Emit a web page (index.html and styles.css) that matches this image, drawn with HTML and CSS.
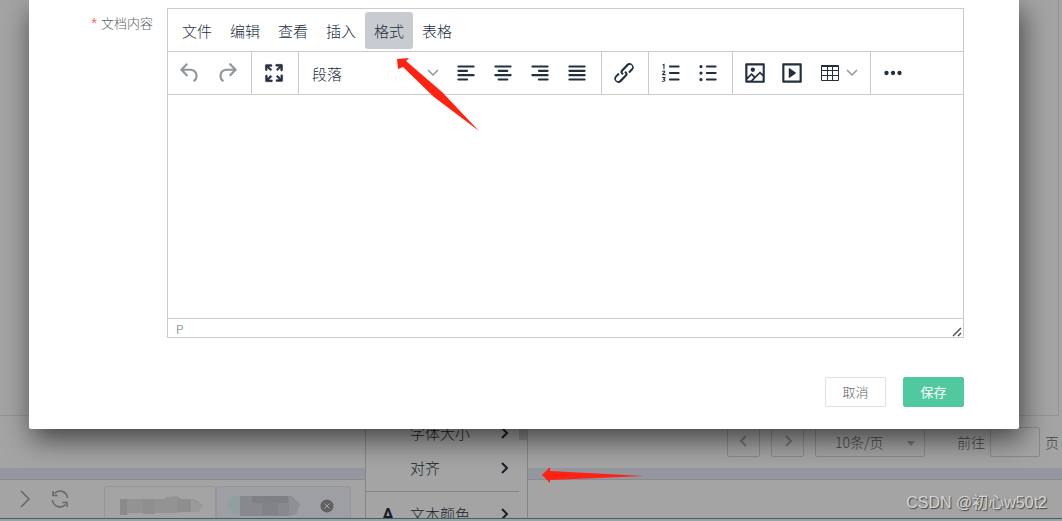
FILE: index.html
```html
<!DOCTYPE html>
<html lang="zh-CN">
<head>
<meta charset="utf-8">
<title>文档内容</title>
<link rel="stylesheet" href="styles.css">
</head>
<body>
<div class="app">
  <div class="panel"></div>
  <div class="pager">
    <button class="page-btn" aria-label="上一页"><svg width="12" height="12" viewBox="0 0 12 12"><path d="M8 1 3 6l5 5"/></svg></button>
    <button class="page-btn" aria-label="下一页"><svg width="12" height="12" viewBox="0 0 12 12"><path d="m4 1 5 5-5 5"/></svg></button>
    <span class="page-size">
      <select aria-label="每页条数"><option>10条/页</option></select>
      <svg width="8" height="5" viewBox="0 0 8 5"><path d="M0 0h8L4 5z"/></svg>
    </span>
    <label class="jump">前往 <input type="text" aria-label="页码"></label>
    <span class="unit">页</span>
  </div>
  <div class="band"></div>
  <div class="tabbar">
    <div class="tab-tools">
      <button class="tool" aria-label="展开"><svg width="12" height="18" viewBox="0 0 12 18"><path d="m2 1 8 8-8 8"/></svg></button>
      <button class="tool" aria-label="刷新"><svg width="18" height="18" viewBox="0 0 18 18"><path d="M1.500 10A7.500 7.500 0 0 0 14.500 14.500M16.500 8A7.500 7.500 0 0 0 3.500 3.500M2 1v4.500h4.500M16 17v-4.500h-4.500"/></svg></button>
    </div>
    <div class="tabs">
      <button class="tab" aria-label="标签一">
        <svg width="84" height="20" viewBox="0 0 84 20"><path fill="#939393" d="M1 3h44l3-2 10-1 5 3h12l9 6-5 7H62l-5 1H10l-2 2H1z"/><path fill="#8d908f" d="M24 3h12v15H24z"/><path fill="#898a89" d="M1 3h7v16H1z"/><path fill="#8e8e8e" d="M58 3h14v13H58z"/><path fill="#999b9a" d="m72 3 12 6-5 7h-7z"/></svg>
      </button>
      <button class="tab tab-on" aria-label="标签二">
        <svg width="72" height="20" viewBox="0 0 72 20"><path fill="#91a09f" d="m5 0 7 0v18H6l-6-7V6z"/><path fill="#87898f" d="M12 0h51l9 8-4 10-8 2H12z"/><path fill="#7f8085" d="M24 0h36v7H24z"/><path fill="#828389" d="M34 7h16v12H34z"/><path fill="#8f9095" d="m61 0 11 8-4 10h-7z"/></svg>
        <svg class="close" width="14" height="14" viewBox="0 0 14 14"><circle cx="7" cy="7" r="6.500"/><path d="m4.500 4.500 5 5m0-5-5 5"/></svg>
      </button>
    </div>
  </div>
  <div class="footline"></div>
</div>

<div class="format-menu" role="menu">
  <div class="format-list">
    <button class="item" role="menuitem"><span class="mark"></span><span class="name">字体大小</span><svg width="10" height="12" viewBox="0 0 10 12"><path d="m2 1 5 5-5 5"/></svg></button>
    <button class="item" role="menuitem"><span class="mark"></span><span class="name">对齐</span><svg width="10" height="12" viewBox="0 0 10 12"><path d="m2 1 5 5-5 5"/></svg></button>
    <hr class="rule">
    <button class="item" role="menuitem"><span class="mark">A</span><span class="name">文本颜色</span><svg width="10" height="12" viewBox="0 0 10 12"><path d="m2 1 5 5-5 5"/></svg></button>
  </div>
  <div class="scroll"><div class="thumb"></div></div>
</div>

<div class="dialog" role="dialog" aria-label="文档">
  <div class="field">
    <label class="caption" for="content"><span class="star">*</span>文档内容</label>
    <div class="editor">
      <div class="menubar">
        <button class="menu">文件</button><button class="menu">编辑</button><button class="menu">查看</button><button class="menu">插入</button><button class="menu menu-on">格式</button><button class="menu">表格</button>
      </div>
      <div class="toolbar">
        <div class="group">
          <button class="tb dim" aria-label="撤销"><svg class="ico" viewBox="0 0 24 24"><path d="M6.4 8H12c3.7 0 6.200 2 6.800 5.100.6 2.700-.4 5.600-2.300 6.800a1 1 0 0 1-1-1.800c1.100-.6 1.800-2.700 1.400-4.600-.5-2.100-2.100-3.500-4.900-3.500H6.400l3.300 3.300a1 1 0 1 1-1.400 1.400l-5-5a1 1 0 0 1 0-1.400l5-5a1 1 0 0 1 1.400 1.400L6.400 8z"/></svg></button>
          <button class="tb dim" aria-label="重做"><svg class="ico" viewBox="0 0 24 24"><path d="M17.600 10H12c-2.800 0-4.400 1.400-4.900 3.500-.4 2 .3 4 1.400 4.600a1 1 0 1 1-1 1.800c-2-1.200-2.900-4.100-2.300-6.800.6-3 3-5.100 6.800-5.100h5.600l-3.300-3.300a1 1 0 1 1 1.400-1.400l5 5a1 1 0 0 1 0 1.400l-5 5a1 1 0 0 1-1.400-1.400l3.300-3.300z"/></svg></button>
        </div>
        <div class="group">
          <button class="tb" aria-label="全屏"><svg class="ico bold" viewBox="0 0 24 24"><path d="m15.300 10-1.200-1.300 2.900-3h-2.300a.9.9 0 1 1 0-1.700H19c.5 0 .9.4.9.9v4.400a.9.9 0 1 1-1.800 0V7l-2.900 3zm0 4 3 3v-2.300a.9.9 0 1 1 1.700 0V19c0 .5-.4.9-.9.9h-4.400a.9.9 0 1 1 0-1.800H17l-3-2.900 1.300-1.200zM10 15.400l-2.900 3h2.300a.9.9 0 1 1 0 1.700H5a.9.9 0 0 1-.9-.9v-4.400a.9.9 0 1 1 1.800 0V17l2.900-3 1.200 1.300zM8.700 10l-3-3v2.300a.9.9 0 0 1-1.700 0V5c0-.5.4-.9.9-.9h4.400a.9.9 0 0 1 0 1.800H7l3 2.900-1.300 1.200z"/></svg></button>
        </div>
        <div class="group">
          <span class="block-format">
            <select aria-label="段落格式"><option>段落</option></select>
            <svg class="chev" width="12" height="8" viewBox="0 0 12 8"><path d="m1 1 5 5 5-5"/></svg>
          </span>
          <button class="tb" aria-label="左对齐"><svg class="ico line" viewBox="0 0 24 24"><path d="M5 6h14M5 10h8M5 14h14M5 18h8"/></svg></button>
          <button class="tb" aria-label="居中"><svg class="ico line" viewBox="0 0 24 24"><path d="M5 6h14M8 10h8M5 14h14M8 18h8"/></svg></button>
          <button class="tb" aria-label="右对齐"><svg class="ico line" viewBox="0 0 24 24"><path d="M5 6h14M11 10h8M5 14h14M11 18h8"/></svg></button>
          <button class="tb" aria-label="两端对齐"><svg class="ico line" viewBox="0 0 24 24"><path d="M5 6h14M5 10h14M5 14h14M5 18h14"/></svg></button>
        </div>
        <div class="group">
          <button class="tb" aria-label="链接"><svg class="ico" viewBox="0 0 24 24"><path d="M6.200 12.300a1 1 0 0 1 1.400 1.400l-2.100 2a2 2 0 1 0 2.700 2.800l4.800-4.800a1 1 0 0 0 0-1.400 1 1 0 1 1 1.400-1.300 2.900 2.900 0 0 1 0 4L9.600 20a3.900 3.900 0 0 1-5.500-5.500l2-2zm11.600-.6a1 1 0 0 1-1.400-1.400l2-2a2 2 0 1 0-2.600-2.800L11 10.300a1 1 0 0 0 0 1.400A1 1 0 1 1 9.600 13a2.900 2.900 0 0 1 0-4L14.400 4a3.900 3.900 0 0 1 5.500 5.500l-2 2z"/></svg></button>
        </div>
        <div class="group">
          <button class="tb" aria-label="编号列表"><svg class="ico line" viewBox="0 0 24 24"><path d="M11 6h8M11 12h8M11 18h8"/><path class="fine" d="m4.500 4.500 1-.5v4M4.300 10.600c.6-.8 2.200-.6 2 .4-.1.700-1.900 1.300-2 2.500h2.400M4.300 16.200h2l-1 1.500c1.600 0 1.600 2.200-1.200 1.900"/></svg></button>
          <button class="tb" aria-label="项目列表"><svg class="ico line" viewBox="0 0 24 24"><path d="M11 6h8M11 12h8M11 18h8"/><path class="dots" d="M5.500 6h0M5.500 12h0M5.500 18h0"/></svg></button>
        </div>
        <div class="group">
          <button class="tb" aria-label="图片"><svg class="ico" viewBox="0 0 24 24"><path fill-rule="evenodd" d="m5 15.700 3.300-3.200c.3-.3.7-.3 1 0L12 15l4.100-4c.3-.4.8-.4 1 0l2 1.900V5H5v10.700zM5 18v1h3l2.800-2.900-2-2L5 17.900zm14-3-2.500-2.400-6.400 6.500H19v-4zM4 3h16c.6 0 1 .4 1 1v16c0 .6-.4 1-1 1H4a1 1 0 0 1-1-1V4c0-.6.4-1 1-1zm6 8a2 2 0 1 0 0-4 2 2 0 0 0 0 4z"/></svg></button>
          <button class="tb" aria-label="媒体"><svg class="ico" viewBox="0 0 24 24"><path fill-rule="evenodd" d="M4 3h16c.6 0 1 .4 1 1v16c0 .6-.4 1-1 1H4a1 1 0 0 1-1-1V4c0-.6.4-1 1-1zm1 2v14h14V5H5z"/><path d="m9.800 7.600 5.600 4a.5.5 0 0 1 0 .8l-5.600 4A.5.5 0 0 1 9 16V8a.5.5 0 0 1 .8-.4z"/></svg></button>
          <button class="tb split" aria-label="表格"><svg class="ico grid" viewBox="0 0 26 26"><path d="M4.500 5.500h17v15h-17zM4.500 6.500h17M4.500 10.500h17M4.500 15.500h17M10.500 6v14M15.500 6v14"/></svg><svg class="chev" width="12" height="8" viewBox="0 0 12 8"><path d="m1 1 5 5 5-5"/></svg></button>
        </div>
        <div class="group">
          <button class="tb" aria-label="更多"><svg class="ico" viewBox="0 0 24 24"><circle cx="6" cy="12" r="2"/><circle cx="12" cy="12" r="2"/><circle cx="18" cy="12" r="2"/></svg></button>
        </div>
      </div>
      <textarea class="content" id="content"></textarea>
      <div class="status"><span>P</span><svg width="10" height="10" viewBox="0 0 10 10"><path d="M1 9 9 1M6 9l3-3"/></svg></div>
    </div>
  </div>
  <div class="actions">
    <button class="btn">取消</button>
    <button class="btn btn-save">保存</button>
  </div>
</div>

<svg class="arrow arrow-format" width="84" height="75" viewBox="0 0 84 75"><path d="m1 2 12-1-3 3 36 31 37 39-45-34L7 10l-5 2z"/></svg>
<svg class="arrow arrow-align" width="102" height="16" viewBox="0 0 102 16"><path d="m0 8 8-8v4l94 5-94 4v3z"/></svg>
<div class="watermark">CSDN @初心w50t2</div>
</body>
</html>
```
FILE: styles.css
```css
* { box-sizing: border-box; }

body {
  margin: 0;
  height: 100vh;
  position: relative;
  overflow: hidden;
  background: #a4a4a4;
  color: #222f3e;
  font: 300 14px "Noto Sans CJK SC", sans-serif;
}

button, select, input, textarea {
  margin: 0;
  padding: 0;
  border: 0;
  background: none;
  color: inherit;
  font: inherit;
  border-radius: 0;
}

select { appearance: none; }
svg { display: block; flex: none; fill: none; }

/* page behind the dialog */
.app { height: 100%; display: flex; flex-direction: column; }

.panel {
  flex: 1;
  margin-right: 3px;
  border: solid #949497;
  border-width: 0 1px 1px 0;
}

.pager {
  display: flex;
  justify-content: flex-end;
  align-items: center;
  padding: 11px 3px;
  color: #44464a;
}

.page-btn {
  width: 33px;
  height: 30px;
  margin-right: 11px;
  padding-bottom: 2px;
  display: flex;
  align-items: center;
  justify-content: center;
  border: 1px solid #8a8b8f;
  border-radius: 2px;
}
.page-btn svg { stroke: #77787c; stroke-width: 2; }

.page-size {
  display: grid;
  width: 110px;
  height: 30px;
  margin-right: 32px;
  border: 1px solid #8a8b8f;
  border-radius: 2px;
  align-items: center;
}
.page-size > * { grid-area: 1 / 1; }
.page-size select { height: 28px; padding-left: 19px; }
.page-size svg { fill: #77787c; justify-self: end; margin: 3px 9px 0 0; pointer-events: none; }

.jump { display: flex; align-items: center; gap: 5px; }
.jump input { width: 50px; height: 30px; border: 1px solid #8a8b8f; border-radius: 2px; }
.unit { margin-left: 5px; }

.band { height: 12px; background: #9496a0; border-bottom: 1px solid #898a92; }

.tabbar { display: flex; height: 38px; }
.tab-tools { display: flex; align-items: center; gap: 20px; width: 104px; padding-left: 19px; }
.tool svg { stroke: #62676c; stroke-width: 1.5; }
.tabs { display: flex; align-items: flex-end; }
.tab {
  display: flex;
  align-items: center;
  height: 32px;
  width: 112px;
  padding: 6px 0 0 14px;
  border: 1px solid #959698;
  border-bottom: 0;
  border-radius: 4px 4px 0 0;
}
.tab-on { width: 135px; padding-left: 11px; gap: 20px; background: #9d9fa4; }
.close circle { fill: #616161; }
.close path { stroke: #a4a4a4; stroke-width: 1; }

.footline { height: 3px; background: #95a6a9; border-top: 1px solid #4f5a60; }

/* submenu reaching below the dialog */
.format-menu {
  position: absolute;
  left: 365px;
  top: 415px;
  bottom: 3px;
  width: 163px;
  display: flex;
  overflow: hidden;
  background: #a4a4a4;
  border: solid #858585;
  border-width: 0 1px;
  color: #171f29;
  font-size: 15px;
}
.format-list { flex: 1; }
.item { display: flex; align-items: center; width: 100%; height: 35px; padding-right: 9px; text-align: left; }
.item svg { stroke: #171f29; stroke-width: 2; }
.mark { width: 44px; text-align: center; font: bold 17px/20px Roboto, sans-serif; }
.name { flex: 1; }
.rule { height: 1px; margin: 6px 0 4px; border: 0; background: #858585; }
.scroll { width: 8px; }
.thumb { height: 25px; background: #8d8d8d; }

/* dialog */
.dialog {
  position: absolute;
  top: 0;
  left: 29px;
  right: 43px;
  padding: 8px 55px 22px 60px;
  background: #fff;
  border-radius: 0 0 2px 2px;
  box-shadow: 3px 10px 28px rgba(0, 0, 0, .6);
}
.field { display: flex; gap: 14px; }
.caption { width: 64px; padding-top: 5px; display: flex; justify-content: flex-end; gap: 4px; font-size: 13px; line-height: 20px; color: #606266; white-space: nowrap; }
.star { color: #f56c6c; font-family: "Liberation Sans", sans-serif; font-size: 15px; }

.editor { flex: 1; min-width: 0; border: 1px solid #ccc; }
.menubar { display: flex; padding: 3px 5px 2px; font-size: 15px; }
.menu { width: 48px; height: 37px; border-radius: 3px; }
.menu-on { background: #c8cbcf; }

.toolbar { display: flex; height: 44px; border: solid #ccc; border-width: 1px 0; }
.group { display: flex; align-items: center; padding: 0 6px 0 3px; border-right: 1px solid #ccc; }
.group:last-child { border-right: 0; }
.tb { display: flex; align-items: center; justify-content: center; width: 37px; height: 37px; }
.dim { opacity: .5; }
.ico { width: 26px; height: 26px; fill: #222f3e; }
.bold { stroke: #222f3e; stroke-width: .4; }
.line { fill: none; stroke: #222f3e; stroke-width: 2; stroke-linecap: round; }
.fine { stroke-width: 1; }
.dots { stroke-width: 3; }
.grid { fill: none; stroke: #222f3e; stroke-width: 1; }
.split { width: 54px; gap: 3px; }
.chev { stroke: #90979f; stroke-width: 1.5; }
.block-format { display: grid; align-items: center; width: 145px; font-size: 15px; }
.block-format > * { grid-area: 1 / 1; }
.block-format select { height: 37px; padding-left: 10px; }
.block-format .chev { justify-self: end; margin-right: 8px; pointer-events: none; }

.content { display: block; width: 100%; height: 223px; resize: none; outline: 0; }
.status {
  display: flex;
  justify-content: space-between;
  align-items: center;
  height: 19px;
  padding: 0 1px 0 8px;
  border-top: 1px solid #ccc;
  color: #6b737c;
  font-size: 12px;
}
.status svg { align-self: flex-end; stroke: #4b535c; stroke-width: 1.5; }

.actions { display: flex; justify-content: flex-end; gap: 17px; margin-top: 39px; }
.btn { width: 61px; height: 30px; padding-bottom: 2px; border: 1px solid #dcdfe6; border-radius: 2px; color: #606266; font-size: 13px; }
.btn-save { background: #50c99e; border-color: #50c99e; color: #fff; font-weight: 400; }

/* annotations */
.arrow { position: absolute; fill: #ff2213; pointer-events: none; }
.arrow-format { left: 396px; top: 57px; }
.arrow-align { left: 542px; top: 467px; }
.watermark {
  position: absolute;
  right: 15px;
  bottom: 6px;
  color: #d4d4d4;
  font: 16px/24px "Liberation Sans", "Noto Sans CJK SC", sans-serif;
  text-shadow: 1px 1px 1px #444;
}
```
